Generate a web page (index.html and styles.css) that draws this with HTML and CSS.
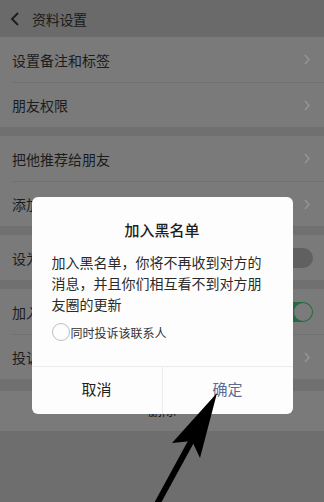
FILE: index.html
```html
<!DOCTYPE html>
<html lang="zh">
<head>
<meta charset="utf-8">
<link rel="stylesheet" href="styles.css">
</head>
<body>
<div class="screen">
  <header class="topbar">
    <svg class="back" width="10" height="14" viewBox="0 0 10 14"><path d="M8 1 L2 7 L8 13" fill="none" stroke="#1c1c1c" stroke-width="1.8"/></svg>
    <span class="title">资料设置</span>
  </header>

  <section class="group first">
    <div class="row"><span>设置备注和标签</span><svg class="chev" width="6" height="11" viewBox="0 0 6 11"><path d="M1 1 L5 5.5 L1 10" fill="none" stroke="#979797" stroke-width="1.3"/></svg></div>
    <div class="row"><span>朋友权限</span><svg class="chev" width="6" height="11" viewBox="0 0 6 11"><path d="M1 1 L5 5.5 L1 10" fill="none" stroke="#979797" stroke-width="1.3"/></svg></div>
  </section>

  <section class="group">
    <div class="row"><span>把他推荐给朋友</span><svg class="chev" width="6" height="11" viewBox="0 0 6 11"><path d="M1 1 L5 5.5 L1 10" fill="none" stroke="#979797" stroke-width="1.3"/></svg></div>
    <div class="row"><span>添加到桌面</span><svg class="chev" width="6" height="11" viewBox="0 0 6 11"><path d="M1 1 L5 5.5 L1 10" fill="none" stroke="#979797" stroke-width="1.3"/></svg></div>
  </section>

  <section class="group">
    <div class="row"><span>设为星标朋友</span><span class="toggle off"><span class="knob"></span></span></div>
  </section>

  <section class="group">
    <div class="row"><span>加入黑名单</span><span class="toggle on"><span class="knob"></span></span></div>
    <div class="row"><span>投诉</span><svg class="chev" width="6" height="11" viewBox="0 0 6 11"><path d="M1 1 L5 5.5 L1 10" fill="none" stroke="#979797" stroke-width="1.3"/></svg></div>
  </section>

  <div class="delete"><span>删除</span></div>
  <div class="rest"></div>

  <div class="overlay">
    <div class="dialog">
      <div class="d-title">加入黑名单</div>
      <p class="d-body">加入黑名单，你将不再收到对方的消息，并且你们相互看不到对方朋友圈的更新</p>
      <label class="d-check"><span class="circle"></span><span>同时投诉该联系人</span></label>
      <div class="d-buttons">
        <button class="btn cancel">取消</button>
        <button class="btn ok">确定</button>
      </div>
    </div>
  </div>

  <svg class="arrow" width="324" height="502" viewBox="0 0 324 502">
    <line x1="157" y1="504" x2="193" y2="438" stroke="#000" stroke-width="6"/>
    <polygon points="217,393 200,458 192,441 172,443" fill="#000"/>
  </svg>
</div>
</body>
</html>
```

FILE: styles.css
```css
* { box-sizing: border-box; }
html, body { margin: 0; padding: 0; }
body {
  font-family: "Noto Sans CJK SC", "Noto Sans", sans-serif;
  background: #6e6e6e;
}
.screen {
  position: relative;
  width: 324px;
  height: 502px;
  overflow: hidden;
  display: flex;
  flex-direction: column;
  background: #707070;
}
.topbar {
  height: 37px;
  flex: none;
  display: flex;
  align-items: center;
  padding-left: 10px;
  background: #6a6a6a;
}
.back { margin-right: 12px; margin-top: 1px; }
.title { font-size: 14px; color: #1a1a1a; letter-spacing: -0.3px; }

.group { background: #7a7a7a; margin-top: 9px; flex: none; }
.group.first { margin-top: 0; }
.row {
  height: 45px;
  display: flex;
  align-items: center;
  justify-content: space-between;
  margin-left: 12px;
  padding-right: 13px;
  font-size: 14px;
  color: #1c1c1c;
}
.row + .row { border-top: 1px solid #717171; }
.chev { margin-right: 1px; }

.toggle {
  width: 42px;
  height: 20px;
  border-radius: 10px;
  position: relative;
  margin-right: -2px;
}
.toggle.off { background: #606060; }
.toggle.on { background: #246a42; }
.toggle .knob {
  position: absolute;
  top: 1px;
  width: 18px;
  height: 18px;
  border-radius: 50%;
  background: #7b7b7b;
}
.toggle.on .knob { right: 1px; }
.toggle.off .knob { left: 1px; background: #767676; }

.delete {
  margin-top: 12px;
  height: 40px;
  flex: none;
  background: #7a7a7a;
  display: flex;
  align-items: center;
  justify-content: center;
  padding-bottom: 4px;
  font-size: 14px;
  color: #1c1c1c;
}
.rest { flex: 1; background: #6e6e6e; }

.overlay {
  position: absolute;
  inset: 0;
  display: flex;
  justify-content: center;
  align-items: flex-start;
  padding-top: 197px;
}
.dialog {
  width: 261px;
  background: #fdfdfd;
  border-radius: 6px;
  display: flex;
  flex-direction: column;
}
.d-title {
  padding-top: 22px;
  line-height: 22px;
  text-align: center;
  font-size: 15px;
  color: #1e1e1e;
  font-weight: 500;
}
.d-body {
  margin: 11px 0 0;
  padding: 0 20px;
  font-size: 14px;
  line-height: 21px;
  color: #2a2a2a;
}
.d-check {
  display: flex;
  align-items: center;
  margin: 8px 0 0 20px;
  font-size: 12px;
  color: #333;
  height: 18px;
}
.circle {
  width: 18px;
  height: 18px;
  border-radius: 50%;
  border: 1.5px solid #bdbdbd;
  margin-right: 1px;
}
.d-buttons {
  margin-top: 25px;
  display: flex;
  border-top: 1px solid #ececec;
  height: 48px;
}
.btn {
  flex: 1;
  border: 0;
  background: transparent;
  font-family: inherit;
  font-size: 15px;
  padding: 0 0 4px;
}
.btn.cancel { color: #1e1e1e; border-right: 1px solid #ececec; }
.btn.ok { color: #5a6c93; }

.arrow { position: absolute; left: 0; top: 0; }
```
